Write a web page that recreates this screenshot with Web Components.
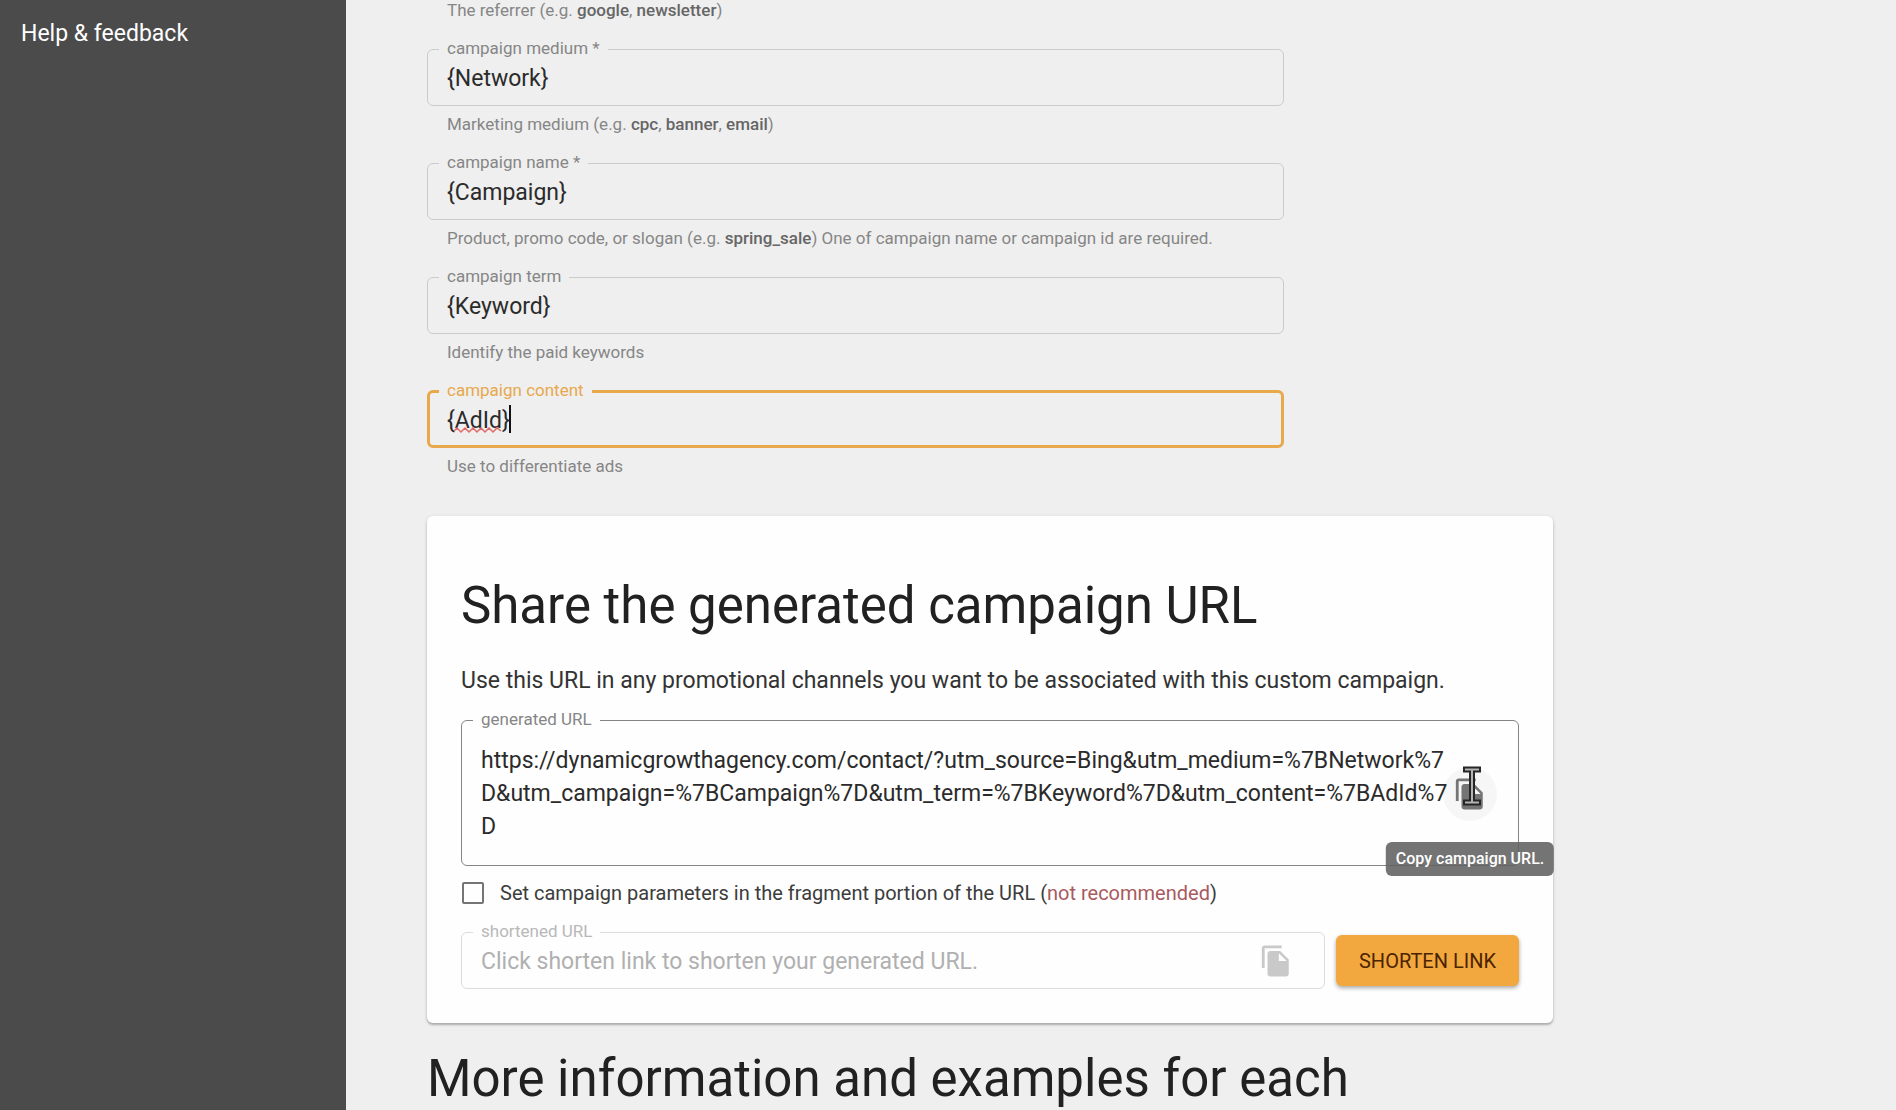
<!DOCTYPE html>
<html lang="en">
<head>
  <meta charset="utf-8">
  <meta name="viewport" content="width=device-width, initial-scale=1">
  <title>Campaign URL Builder</title>
  <style>
    body {
      margin: 0;
      font-family: Roboto, "Liberation Sans", sans-serif;
      color: #212121;
      background: #efefef;
    }
  </style>
</head>
<body>
  <builder-page></builder-page>

  <script>
    /**
     * Outlined text field. The legend cuts the notch in the border.
     * Attributes: label, value, placeholder, multiline, active, disabled, strong
     */
    class OutlinedField extends HTMLElement {

      constructor() {
        super();
        this.attachShadow({ mode: 'open' });
      }

      connectedCallback() {
        const label = this.getAttribute('label');
        const disabled = this.hasAttribute('disabled') ? 'disabled' : '';
        const control = this.hasAttribute('multiline')
          ? `<textarea id='control' rows='3' readonly spellcheck='false'></textarea>`
          : `<input id='control' type='text' spellcheck='false' ${disabled}>`;

        this.shadowRoot.innerHTML = `
          <style>
            :host {
              display: block;
              --line: #cbcbcb;
              --label: #868686;
            }

            :host([strong]) {
              --line: #858585;
            }

            :host([disabled]) {
              --line: #dcdcdc;
              --label: #b8b8b8;
            }

            :host([active]) {
              --line: #e8a84c;
              --label: #e8a84c;
            }

            fieldset {
              margin: 0;
              padding: 0;
              min-width: 0;
              border: 1px solid var(--line);
              border-radius: 6px;
            }

            legend {
              margin-left: 11px;
              padding: 0 8px 2px;
              font-size: 17px;
              line-height: 18px;
              color: var(--label);
            }

            #row {
              position: relative;
              display: flex;
              align-items: center;
              padding: 0 21px 8px 19px;
            }

            input,
            textarea {
              display: block;
              flex: 1;
              min-width: 0;
              box-sizing: border-box;
              margin: 0;
              padding: 0;
              border: 0;
              outline: 0;
              background: none;
              font: inherit;
              font-size: 23px;
              color: #2b2b2b;
            }

            input {
              height: 38px;
            }

            input::placeholder {
              color: #b0b0b0;
              opacity: 1;
            }

            textarea {
              margin-right: -10px;
              line-height: 33px;
              resize: none;
              overflow: hidden;
              word-break: break-all;
            }

            :host([multiline]) #row {
              padding-top: 14px;
              padding-bottom: 22px;
            }

            :host([active]) fieldset {
              border-width: 3px;
            }

            :host([active]) legend {
              margin-left: 9px;
            }

            :host([active]) #row {
              padding-left: 17px;
              padding-bottom: 6px;
            }

            #helper {
              margin-top: 8px;
              padding: 0 20px;
              font-size: 17px;
              line-height: 20px;
              color: #868686;
            }

            #helper[hidden] {
              display: none;
            }

            ::slotted(b) {
              font-weight: 500;
              color: #666666;
            }
          </style>
          <fieldset>
            <legend><label for='control'>${label}</label></legend>
            <div id='row'>
              ${control}
              <slot name='end'></slot>
            </div>
          </fieldset>
          <div id='helper'><slot></slot></div>
        `;

        this._control = this.shadowRoot.querySelector('#control');
        this._control.value = this.getAttribute('value') || '';
        if (this.hasAttribute('placeholder')) {
          this._control.placeholder = this.getAttribute('placeholder');
        }
        this.shadowRoot.querySelector('#helper').hidden = !this.hasAttribute('helper');
      }

    }

    customElements.define('outlined-field', OutlinedField);

    /**
     * Caret and spelling mark shown over the text of the active field
     */
    class EditMarks extends HTMLElement {

      constructor() {
        super();
        this.attachShadow({ mode: 'open' });
        this.shadowRoot.innerHTML = `
          <style>
            :host {
              position: absolute;
              left: 24px;
              top: 4px;
              pointer-events: none;
            }

            svg {
              display: block;
            }
          </style>
          <svg width='58' height='30' viewBox='0 0 58 30' fill='none' aria-hidden='true'>
            <path d='M0 26l3-3 4 4 4-4 4 4 4-4 4 4 4-4 4 4 4-4 4 4 4-4 4 3' stroke='#e06a66' stroke-width='1.5'/>
            <path d='M56 0v28' stroke='#111111' stroke-width='2'/>
          </svg>
        `;
      }

    }

    customElements.define('edit-marks', EditMarks);

    class CopyButton extends HTMLElement {

      constructor() {
        super();
        this.attachShadow({ mode: 'open' });
      }

      connectedCallback() {
        const tip = this.getAttribute('tip');
        this.shadowRoot.innerHTML = `
          <style>
            :host {
              position: relative;
              display: block;
              margin: -8px 0;
            }

            button {
              display: flex;
              align-items: center;
              justify-content: center;
              width: 54px;
              height: 54px;
              padding: 0;
              border: 0;
              border-radius: 50%;
              background: none;
              color: #757575;
            }

            button:disabled {
              color: #c9c9c9;
            }

            :host([hovered]) button {
              background: rgba(0, 0, 0, 0.03);
            }

            #tip {
              position: absolute;
              top: calc(100% + 21px);
              left: 50%;
              transform: translateX(-50%);
              z-index: 10;
              padding: 0 10px;
              border-radius: 6px;
              background: rgba(97, 97, 97, 0.88);
              color: #ffffff;
              font-size: 16px;
              font-weight: 500;
              line-height: 34px;
              white-space: nowrap;
            }

            #pointer {
              position: absolute;
              left: 19px;
              top: -1px;
              pointer-events: none;
            }
          </style>
          <button type='button' aria-label='Copy' ${this.hasAttribute('disabled') ? 'disabled' : ''}>
            <svg width='34' height='34' viewBox='0 0 24 24' fill='currentColor' aria-hidden='true'>
              <path d='M16 1H4c-1.1 0-2 .9-2 2v14h2V3h12V1zm-1 4l6 6v10c0 1.1-.9 2-2 2H7.99C6.89 23 6 22.1 6 21V7c0-1.1.89-2 1.99-2h7zm-1 7h5.5L14 6.5V12z'/>
            </svg>
          </button>
          ${tip ? `
            <svg id='pointer' width='20' height='40' viewBox='0 0 20 40' fill='none' aria-hidden='true'>
              <path d='M1 3.500h18M10 3.500v33M1 36.500h18' stroke='#262626' stroke-width='6'/>
              <path d='M3 3.500h14M10 3.500v33M3 36.500h14' stroke='#b4b4b4' stroke-width='2'/>
            </svg>
            <div id='tip' role='tooltip'>${tip}</div>
          ` : ''}
        `;
      }

    }

    customElements.define('copy-button', CopyButton);

    class SideNav extends HTMLElement {

      constructor() {
        super();
        this.attachShadow({ mode: 'open' });
        this.shadowRoot.innerHTML = `
          <style>
            :host {
              display: block;
              box-sizing: border-box;
              padding: 18px 21px;
              background: #4b4b4b;
            }

            ::slotted(a) {
              display: block;
              font-size: 23px;
              line-height: 32px;
              color: #ffffff;
              text-decoration: none;
            }
          </style>
          <nav><slot></slot></nav>
        `;
      }

    }

    customElements.define('side-nav', SideNav);

    class ShareCard extends HTMLElement {

      constructor() {
        super();
        this.attachShadow({ mode: 'open' });
        this.shadowRoot.innerHTML = `
          <style>
            :host {
              display: block;
              padding: 60px 34px;
              border-radius: 6px;
              padding-bottom: 34px;
              background: #fefefe;
              box-shadow: 0 2px 2px rgba(0, 0, 0, 0.22), 0 1px 4px rgba(0, 0, 0, 0.12);
            }

            h2 {
              margin: 0;
              font-size: 51px;
              font-weight: 400;
              line-height: 60px;
            }

            p {
              margin: 28px 0 12px;
              font-size: 23px;
              line-height: 34px;
              color: #333333;
            }

            #fragment {
              display: flex;
              align-items: center;
              gap: 16px;
              margin: 15px 0 17px;
              padding-left: 1px;
              font-size: 20px;
              line-height: 24px;
              color: #3c3c3c;
            }

            #fragment input {
              appearance: none;
              box-sizing: border-box;
              width: 22px;
              height: 22px;
              margin: 0;
              border: 2px solid #757575;
              border-radius: 2px;
            }

            em {
              font-style: normal;
              color: #a85a5e;
            }

            #shorten {
              display: flex;
              align-items: flex-end;
              gap: 11px;
            }

            #shorten outlined-field {
              flex: 1;
              min-width: 0;
            }

            #shorten button {
              height: 51px;
              margin: 0 0 3px;
              padding: 0 23px;
              border: 0;
              border-radius: 6px;
              background: #f3a73f;
              box-shadow: 0 2px 4px rgba(0, 0, 0, 0.35);
              color: #4a2500;
              font: inherit;
              font-size: 20px;
              text-transform: uppercase;
            }
          </style>
          <h2>Share the generated campaign URL</h2>
          <p>Use this URL in any promotional channels you want to be associated with this custom campaign.</p>
          <outlined-field label='generated URL' multiline strong
            value='https://dynamicgrowthagency.com/contact/?utm_source=Bing&amp;utm_medium=%7BNetwork%7D&amp;utm_campaign=%7BCampaign%7D&amp;utm_term=%7BKeyword%7D&amp;utm_content=%7BAdId%7D'>
            <copy-button slot='end' hovered tip='Copy campaign URL.'></copy-button>
          </outlined-field>
          <div id='fragment'>
            <input id='use-fragment' type='checkbox'>
            <label for='use-fragment'>Set campaign parameters in the fragment portion of the URL (<em>not recommended</em>)</label>
          </div>
          <div id='shorten'>
            <outlined-field label='shortened URL' disabled
              placeholder='Click shorten link to shorten your generated URL.'>
              <copy-button slot='end' disabled></copy-button>
            </outlined-field>
            <button type='button'>Shorten link</button>
          </div>
        `;
      }

    }

    customElements.define('share-card', ShareCard);

    class BuilderPage extends HTMLElement {

      constructor() {
        super();
        this.attachShadow({ mode: 'open' });
        this.shadowRoot.innerHTML = `
          <style>
            :host {
              display: grid;
              grid-template-columns: 346px 1fr;
              height: 100vh;
              overflow: hidden;
            }

            main {
              min-width: 0;
              padding: 0 80px 0 81px;
            }

            #content {
              max-width: 1126px;
            }

            form {
              display: grid;
              gap: 19px;
              max-width: 857px;
              margin-bottom: 40px;
            }

            #source-helper {
              padding: 0 20px;
              font-size: 17px;
              line-height: 20px;
              color: #868686;
            }

            #source-helper b {
              font-weight: 500;
              color: #666666;
            }

            h2 {
              margin: 26px 0 0;
              font-size: 51px;
              font-weight: 400;
              line-height: 60px;
            }
          </style>
          <side-nav><a href='#help'>Help &amp; feedback</a></side-nav>
          <main>
            <div id='content'>
              <form>
                <div id='source-helper'>The referrer (e.g. <b>google</b>, <b>newsletter</b>)</div>
                <outlined-field label='campaign medium *' value='{Network}' helper>Marketing medium (e.g. <b>cpc</b>, <b>banner</b>, <b>email</b>)</outlined-field>
                <outlined-field label='campaign name *' value='{Campaign}' helper>Product, promo code, or slogan (e.g. <b>spring_sale</b>) One of campaign name or campaign id are required.</outlined-field>
                <outlined-field label='campaign term' value='{Keyword}' helper>Identify the paid keywords</outlined-field>
                <outlined-field label='campaign content' value='{AdId}' active helper><edit-marks slot='end'></edit-marks>Use to differentiate ads</outlined-field>
              </form>
              <share-card></share-card>
              <h2>More information and examples for each</h2>
            </div>
          </main>
        `;
      }

    }

    customElements.define('builder-page', BuilderPage);
  </script>
</body>
</html>
